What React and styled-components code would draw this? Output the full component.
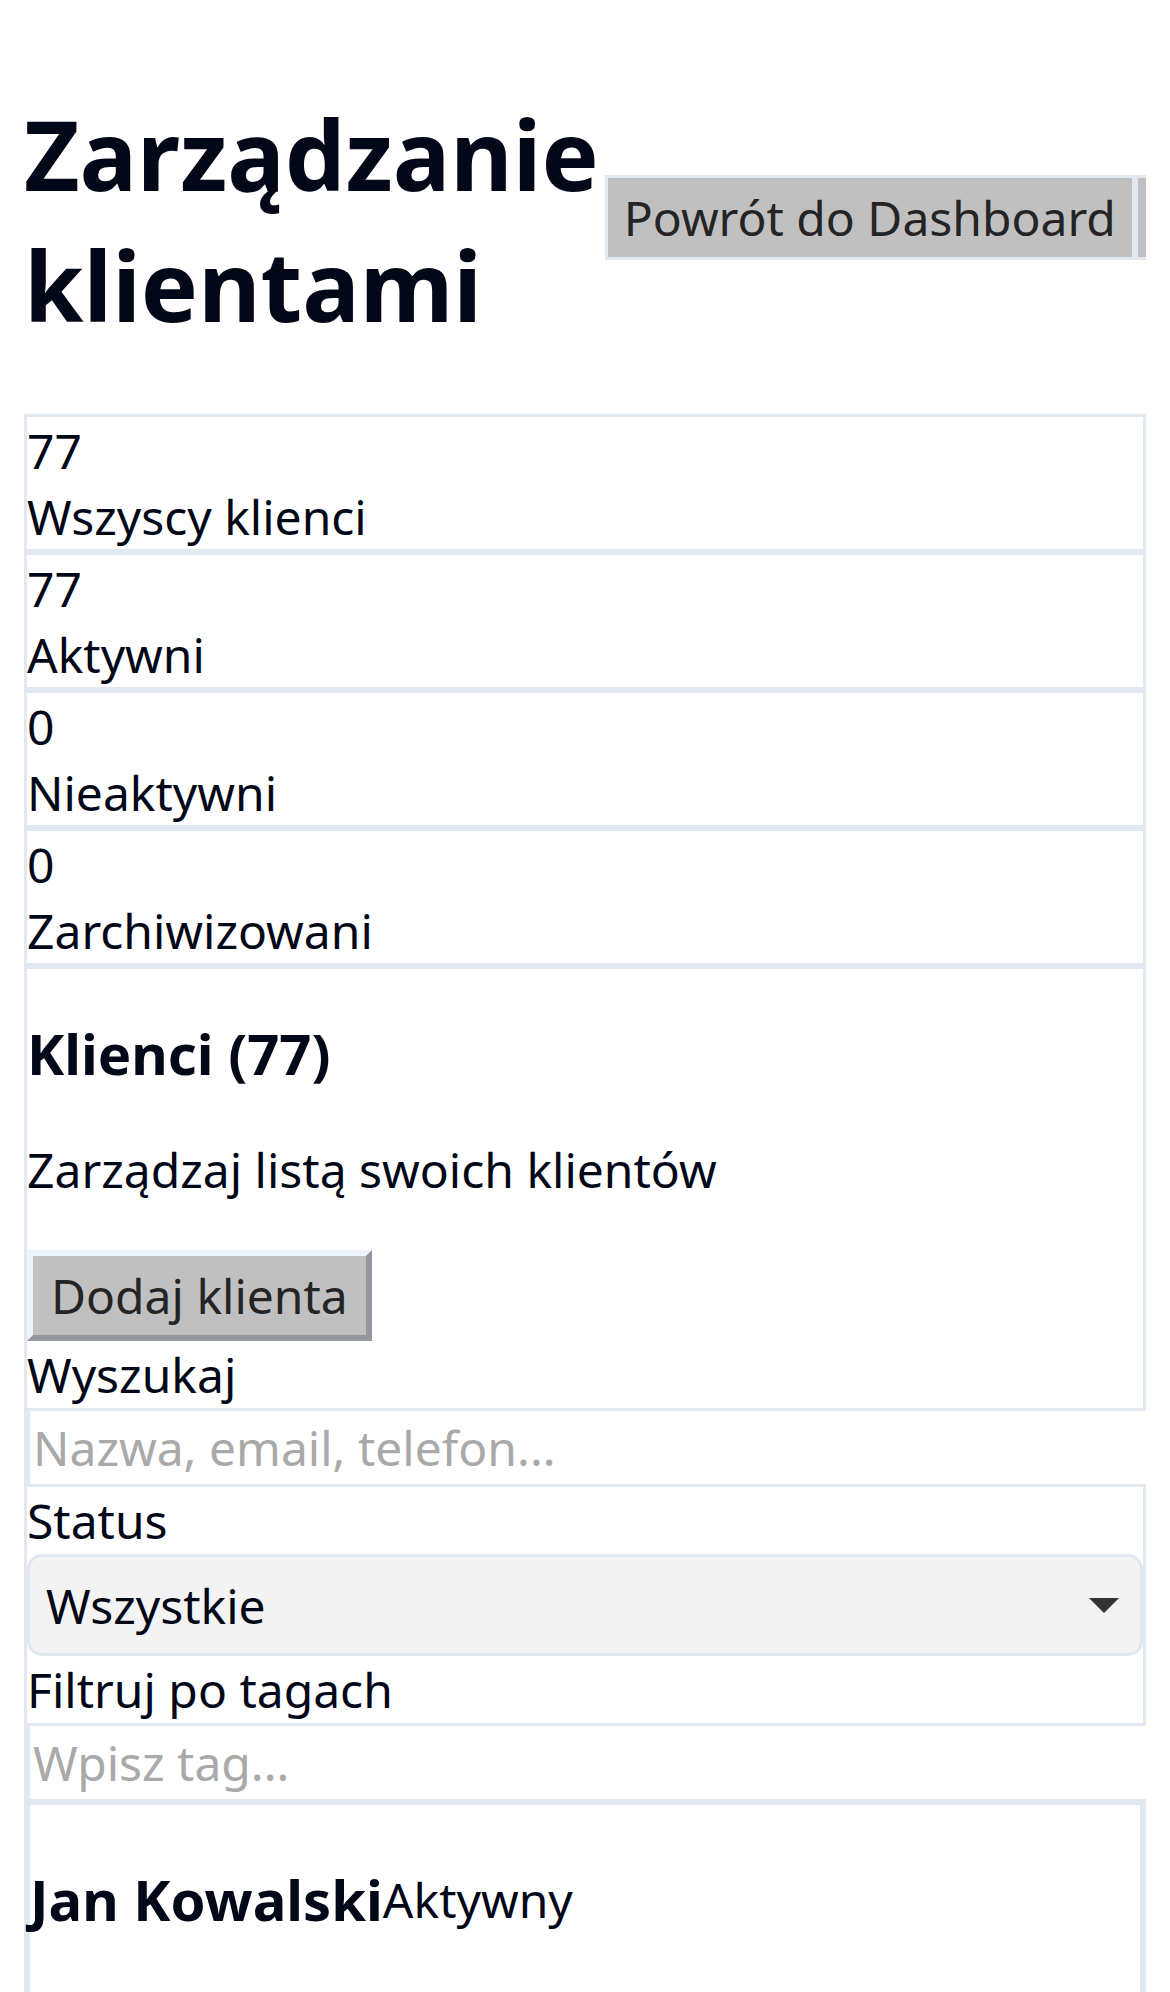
import React from 'react'
import styled, {createGlobalStyle} from 'styled-components'

const GlobalStyle = createGlobalStyle`
    html {
        scrollbar-width: none;
    }
    html::-webkit-scrollbar {
        display: none;
    }
    body {
        margin: 24px;
        background: #ffffff;
        color: #020817;
        font-family: "Noto Sans", "Open Sans", sans-serif;
        font-size: 48px;
    }
    * {
        border-color: #e2e8f0;
    }
`

const stats = [
    {value: 77, label: 'Wszyscy klienci'},
    {value: 77, label: 'Aktywni'},
    {value: 0, label: 'Nieaktywni'},
    {value: 0, label: 'Zarchiwizowani'},
]

const clients = [
    {id: 1, name: 'Jan Kowalski', status: 'Aktywny', email: 'jan.kowalski@example.com'},
]

export default function App() {
    return (
        <>
            <GlobalStyle/>
            <Header>
                <Title>Zarządzanie klientami</Title>
                <Actions>
                    <NavButton>Powrót do Dashboard</NavButton>
                    <NavButton>Wyloguj się</NavButton>
                </Actions>
            </Header>

            {stats.map(item =>
                <StatCard key={item.label}>
                    <StatValue>{item.value}</StatValue>
                    <div>{item.label}</div>
                </StatCard>
            )}

            <Panel>
                <PanelTitle>Klienci (77)</PanelTitle>
                <PanelText>Zarządzaj listą swoich klientów</PanelText>
                <AddButton>Dodaj klienta</AddButton>

                <FieldLabel htmlFor="search">Wyszukaj</FieldLabel>
                <TextInput id="search" placeholder="Nazwa, email, telefon..."/>

                <FieldLabel htmlFor="status">Status</FieldLabel>
                <SelectWrap>
                    <Select id="status" defaultValue="all">
                        <option value="all">Wszystkie</option>
                        <option value="active">Aktywni</option>
                        <option value="inactive">Nieaktywni</option>
                        <option value="archived">Zarchiwizowani</option>
                    </Select>
                    <Arrow viewBox="0 0 30 15" aria-hidden="true">
                        <path d="M0 0 L30 0 L15 15 Z"/>
                    </Arrow>
                </SelectWrap>

                <FieldLabel htmlFor="tags">Filtruj po tagach</FieldLabel>
                <TextInput id="tags" placeholder="Wpisz tag..."/>

                {clients.map(client =>
                    <ClientCard key={client.id}>
                        <ClientRow>
                            <ClientName>{client.name}</ClientName>
                            <span>{client.status}</span>
                        </ClientRow>
                        <div>{client.email}</div>
                    </ClientCard>
                )}
            </Panel>
        </>
    )
}

const Header = styled.header`
    display: flex;
    align-items: center;
    gap: 6px;
`

const Title = styled.h1`
    margin: 64px 0;
    font-size: 96px;
    font-weight: 700;
    line-height: normal;
`

const Actions = styled.div`
    display: flex;
    flex-shrink: 0;
    margin-top: -4px;
`

const NavButton = styled.button`
    flex-shrink: 0;
    font: inherit;
    color: #242424;
    background: #c0c0c0;
    border: 3px solid #e2e8f0;
    padding: 7px 16px;
    white-space: nowrap;
`

const StatCard = styled.div`
    border: 3px solid #e2e8f0;
`

const StatValue = styled.div`
    line-height: 67px;
`

const Panel = styled.div`
    border: 3px solid #e2e8f0;
`

const PanelTitle = styled.h3`
    margin: 56px 0;
    font-size: 56.16px;
    font-weight: 700;
    line-height: 1;
`

const PanelText = styled.p`
    margin: 48px 0;
`

const AddButton = styled.button`
    display: block;
    font: inherit;
    color: #242424;
    background: #c0c0c0;
    border-width: 6px;
    border-style: solid;
    border-color: #eef4fc #94979c #94979c #eef4fc;
    padding: 7px 18px;
`

const FieldLabel = styled.label`
    display: block;
    line-height: 67px;
`

const TextInput = styled.input`
    display: block;
    width: 100%;
    box-sizing: content-box;
    font: inherit;
    color: #020817;
    background: #ffffff;
    border: 3px solid #e2e8f0;
    padding: 4px 3px;
    margin: 0;
    outline: none;

    &::placeholder {
        color: #a9a9a9;
    }
`

const SelectWrap = styled.div`
    position: relative;
`

const Select = styled.select`
    display: block;
    width: 100%;
    height: 102px;
    box-sizing: border-box;
    appearance: none;
    font: inherit;
    color: #020817;
    background: #f3f3f3;
    border: 3px solid #e2e8f0;
    border-radius: 15px;
    padding: 0 16px;
    margin: 0;
`

const Arrow = styled.svg`
    position: absolute;
    right: 24px;
    top: 44px;
    width: 30px;
    height: 15px;
    fill: #333333;
    pointer-events: none;
`

const ClientCard = styled.div`
    border: 3px solid #e2e8f0;
`

const ClientRow = styled.div`
    display: flex;
    align-items: center;
`

const ClientName = styled.h3`
    margin: 56px 0;
    font-size: 56.16px;
    font-weight: 700;
    line-height: normal;
`
